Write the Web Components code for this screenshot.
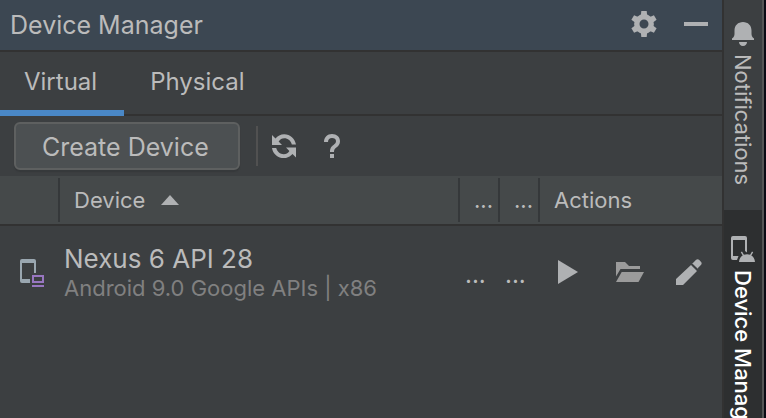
<!DOCTYPE html>
<html lang="en">
<head>
<meta charset="utf-8">
<title>Device Manager</title>
<style>
  :root {
    --panel: #3c3f41; --raised: #45494a; --title: #3c4752; --line: #323232;
    --text: #bbbbbb; --dim: #808080; --icon: #afb1b3; --accent: #4a88c7;
  }
  html, body { margin: 0; height: 100%; overflow: hidden; }
  body { background: var(--panel); color: var(--text); font-family: Inter, "Noto Sans", sans-serif; }
</style>
</head>
<body>
<dm-workbench>
  <dm-title-bar slot="panel">Device Manager</dm-title-bar>
  <dm-tabs slot="panel">
    <dm-tab selected>Virtual</dm-tab>
    <dm-tab>Physical</dm-tab>
  </dm-tabs>
  <dm-toolbar slot="panel">Create Device</dm-toolbar>
  <dm-device-table slot="panel"></dm-device-table>
  <dm-rail-button slot="rail"><dm-icon slot="icon" name="bell"></dm-icon>Notifications</dm-rail-button>
  <dm-rail-button slot="rail" selected><dm-icon slot="icon" name="device"></dm-icon>Device Manager</dm-rail-button>
</dm-workbench>

<script>
const define = (name, html, setup) => {
  const template = document.createElement('template');
  template.innerHTML = `<style>
    *, :host { box-sizing: border-box; }
    button { font: inherit; color: inherit; background: none; border: 0; padding: 0; margin: 0; display: inline-flex; align-items: center; justify-content: center; }
  </style>` + html;
  customElements.define(name, class extends HTMLElement {
    constructor() {
      super();
      this.attachShadow({ mode: 'open' }).append(template.content.cloneNode(true));
    }
    connectedCallback() { if (setup) setup(this, this.shadowRoot); }
  });
};

const tooth = [0, 60, 120, 180, 240, 300]
  .map(a => `<path d="M9.800 5L10.300 0h5.400l.5 5z" transform="rotate(${a} 13 13)"/>`).join('');

const icons = {
  gear: ['0 0 26 26', `<circle cx="13" cy="13" r="7.200" fill="none" stroke="currentColor" stroke-width="5.400"/>${tooth}`],
  minus: ['0 0 24 24', '<path d="M0 10h24v4H0z"/>'],
  refresh: ['0 0 24 24', '<path d="M0 1v10h10L6.600 7.600C8 5.500 9.900 4.300 12.200 4.300c3.800 0 6.600 2.500 7.600 6.200H24C23 4.500 18.200.2 12.200.2 8.600.2 5.600 1.800 3.500 4.500zM24 23.600v-10H14l3.400 3.400c-1.400 2.100-3.300 3.200-5.600 3.200-3.800 0-6.600-2.500-7.600-6.200H0c1 6 5.800 10.200 11.800 10.200 3.600 0 6.600-1.600 8.700-4.100z"/>'],
  help: ['0 0 24 24', '<path d="M4 8C4 3.400 7.300 0 12 0s8 3 8 7.200c0 3-1.500 4.600-3.300 6C14.700 14.800 14 15.500 14 18h-4c0-4 1.400-5.400 3.500-7 1.600-1.200 2.500-2.200 2.500-3.900C16 5.200 14.400 4 12 4S8 5.600 8 8zM10 20h4v4h-4z"/>'],
  play: ['0 0 24 24', '<path d="M2 0l20 12L2 24z"/>'],
  folder: ['0 0 28 24', '<path fill="#9b9b9b" d="M0 2h9l4 4h11v3H4.500L0 16.500z"/><path fill="#9b9b9b" d="M5.700 12H28l-5.500 10H0z"/>'],
  pencil: ['0 0 26 26', '<path d="M15 6l6 6L7 26H0v-6zM16.700 4.300l3.200-3.200c1-1 2.400-1 3.400 0l1.600 1.600c1 1 1 2.400 0 3.400L21.700 9.300l.9 1.200-6.800-6.500z"/>'],
  bell: ['0 0 22 24', '<path d="M0 18v-1.500c2-1.500 2.500-2.600 2.500-5V8.500c0-5 3.500-8.500 8.500-8.500s8.500 3.500 8.500 8.500v3c0 2.400.5 3.500 2.500 5V18zM7 20h8c0 2.300-1.500 4-4 4s-4-1.700-4-4z"/>'],
  device: ['0 0 24 26', '<path fill-rule="evenodd" d="M2 0h12a2 2 0 0 1 2 2v14.500L14 15V4H2v16h5.500L6 24H2a2 2 0 0 1-2-2V2A2 2 0 0 1 2 0z"/><path d="M8 26c.3-3.300 1.600-5.300 3.700-6.600L9.800 16.200l1.200-.7 1.900 3.300c2-.7 4.300-.7 6.200 0l1.900-3.300 1.200.7-1.900 3.200C22.400 20.700 23.700 22.700 24 26z"/>'],
  virtual: ['0 0 24 28', '<path fill="#9aa7b0" fill-rule="evenodd" d="M2 0h12a2 2 0 0 1 2 2v12h-2V4H2v16h8v4H2a2 2 0 0 1-2-2V2A2 2 0 0 1 2 0z"/><path fill="#9876c0" fill-rule="evenodd" d="M12 16h12v8H12zm2 2v4h8v-4zM12 26h12v2H12z"/>'],
  sort: ['0 0 18 10', '<path d="M9 0l9 10H0z"/>']
};

define('dm-icon', `<style>
  :host { display: inline-flex; flex: none; color: var(--icon); }
  svg { display: block; fill: currentColor; }
</style><svg aria-hidden="true"></svg>`, (host, root) => {
  const [box, art] = icons[host.getAttribute('name')];
  const svg = root.querySelector('svg');
  const [, , w, h] = box.split(' ');
  svg.setAttribute('viewBox', box);
  svg.setAttribute('width', w);
  svg.setAttribute('height', h);
  svg.innerHTML = art;
});

define('dm-workbench', `<style>
  :host { display: flex; height: 100vh; overflow: hidden; background: #0b0a14; padding-right: 2px; }
  main { flex: 1; min-width: 0; display: flex; flex-direction: column; background: var(--panel); border-right: 2px solid var(--line); }
  aside { flex: none; width: 40px; display: flex; flex-direction: column; overflow: hidden; background: var(--panel); border-right: 2px solid #555555; }
</style>
<main><slot name="panel"></slot></main><aside><slot name="rail"></slot></aside>`);

define('dm-title-bar', `<style>
  :host { display: flex; align-items: center; height: 52px; padding: 0 14px 0 10px; background: var(--title); border-bottom: 2px solid var(--line); }
  h1 { flex: 1; margin: 0; font-size: 25px; line-height: 32px; font-weight: 400; }
  div { display: flex; align-items: center; gap: 27px; padding-bottom: 2px; }
</style>
<h1><slot></slot></h1>
<div><button aria-label="Settings"><dm-icon name="gear"></dm-icon></button><button aria-label="Hide"><dm-icon name="minus"></dm-icon></button></div>`);

define('dm-tabs', `<style>
  :host { display: block; border-bottom: 2px solid var(--line); }
  nav { display: flex; height: 62px; gap: 2px; }
</style><nav role="tablist"><slot></slot></nav>`);

define('dm-tab', `<style>
  :host { display: flex; position: relative; }
  button { padding: 0 27px 2px 24px; font-size: 24px; line-height: 30px; }
  :host([selected])::after { content: ""; position: absolute; left: 0; right: 0; bottom: -2px; height: 6px; background: var(--accent); }
</style><button role="tab"><slot></slot></button>`, (host, root) => {
  root.querySelector('button').setAttribute('aria-selected', host.hasAttribute('selected'));
});

define('dm-toolbar', `<style>
  :host { display: flex; align-items: center; height: 60px; padding: 0 14px; }
  .create { height: 48px; padding: 2px 29px 0 26px; font-size: 25px; line-height: 30px; background: #4c5052; border: 2px solid #5e6060; border-radius: 6px; box-shadow: 0 2px 1px #36393b; }
  hr { width: 2px; height: 40px; margin: 0 14px 0 16px; border: 0; background: #515151; }
  .tools { display: flex; gap: 24px; }
</style>
<button class="create"><slot></slot></button><hr>
<div class="tools"><button aria-label="Refresh"><dm-icon name="refresh"></dm-icon></button><button aria-label="Help"><dm-icon name="help"></dm-icon></button></div>`);

define('dm-device-table', `<style>
  :host { display: block; }
  table { width: 100%; table-layout: fixed; border-collapse: separate; border-spacing: 0; }
  .kind { width: 60px; } .small { width: 40px; } .actions { width: 182px; }
  th, td { padding: 0; text-align: left; font-weight: 400; vertical-align: middle; }
  th { height: 50px; font-size: 22px; line-height: 28px; background: var(--raised); border-bottom: 2px solid var(--line); }
  th > div { display: flex; align-items: center; height: 44px; padding-left: 14px; gap: 16px; border-right: 2px solid #35383a; }
  th:last-child > div { border: 0; }
  td { height: 94px; }
  td.more { padding: 4px 0 0 5px; font-size: 24px; line-height: 30px; }
  .phone { display: flex; padding-left: 20px; }
  .name { display: block; padding-left: 4px; font-size: 26px; line-height: 30px; }
  .info { display: block; padding-left: 4px; font-size: 22px; line-height: 28px; color: var(--dim); }
  .run { display: grid; grid-template-columns: 60px 60px auto; justify-items: start; align-items: center; padding: 0 0 2px 16px; }
</style>
<table>
  <colgroup><col class="kind"><col><col class="small"><col class="small"><col class="actions"></colgroup>
  <thead><tr>
    <th><div></div></th>
    <th aria-sort="ascending"><div><button>Device</button><dm-icon name="sort"></dm-icon></div></th>
    <th><div>...</div></th><th><div>...</div></th><th><div>Actions</div></th>
  </tr></thead>
  <tbody><tr>
    <td><span class="phone"><dm-icon name="virtual"></dm-icon></span></td>
    <td><span class="name">Nexus 6 API 28</span><span class="info">Android 9.0 Google APIs | x86</span></td>
    <td class="more">...</td><td class="more">...</td>
    <td><div class="run"><button aria-label="Launch"><dm-icon name="play"></dm-icon></button><button aria-label="Show files"><dm-icon name="folder"></dm-icon></button><button aria-label="Edit"><dm-icon name="pencil"></dm-icon></button></div></td>
  </tr></tbody>
</table>`);

define('dm-rail-button', `<style>
  :host { display: block; flex: none; }
  button { width: 38px; flex-direction: column; gap: 8px; padding: 22px 0 25px; font-size: 22px; line-height: 26px; }
  span { writing-mode: vertical-rl; white-space: nowrap; }
  :host([selected]) { background: #2d2f30; color: #ffffff; }
  :host([selected]) button { padding-top: 26px; font-weight: 500; }
</style><button><slot name="icon"></slot><span><slot></slot></span></button>`);
</script>
</body>
</html>
